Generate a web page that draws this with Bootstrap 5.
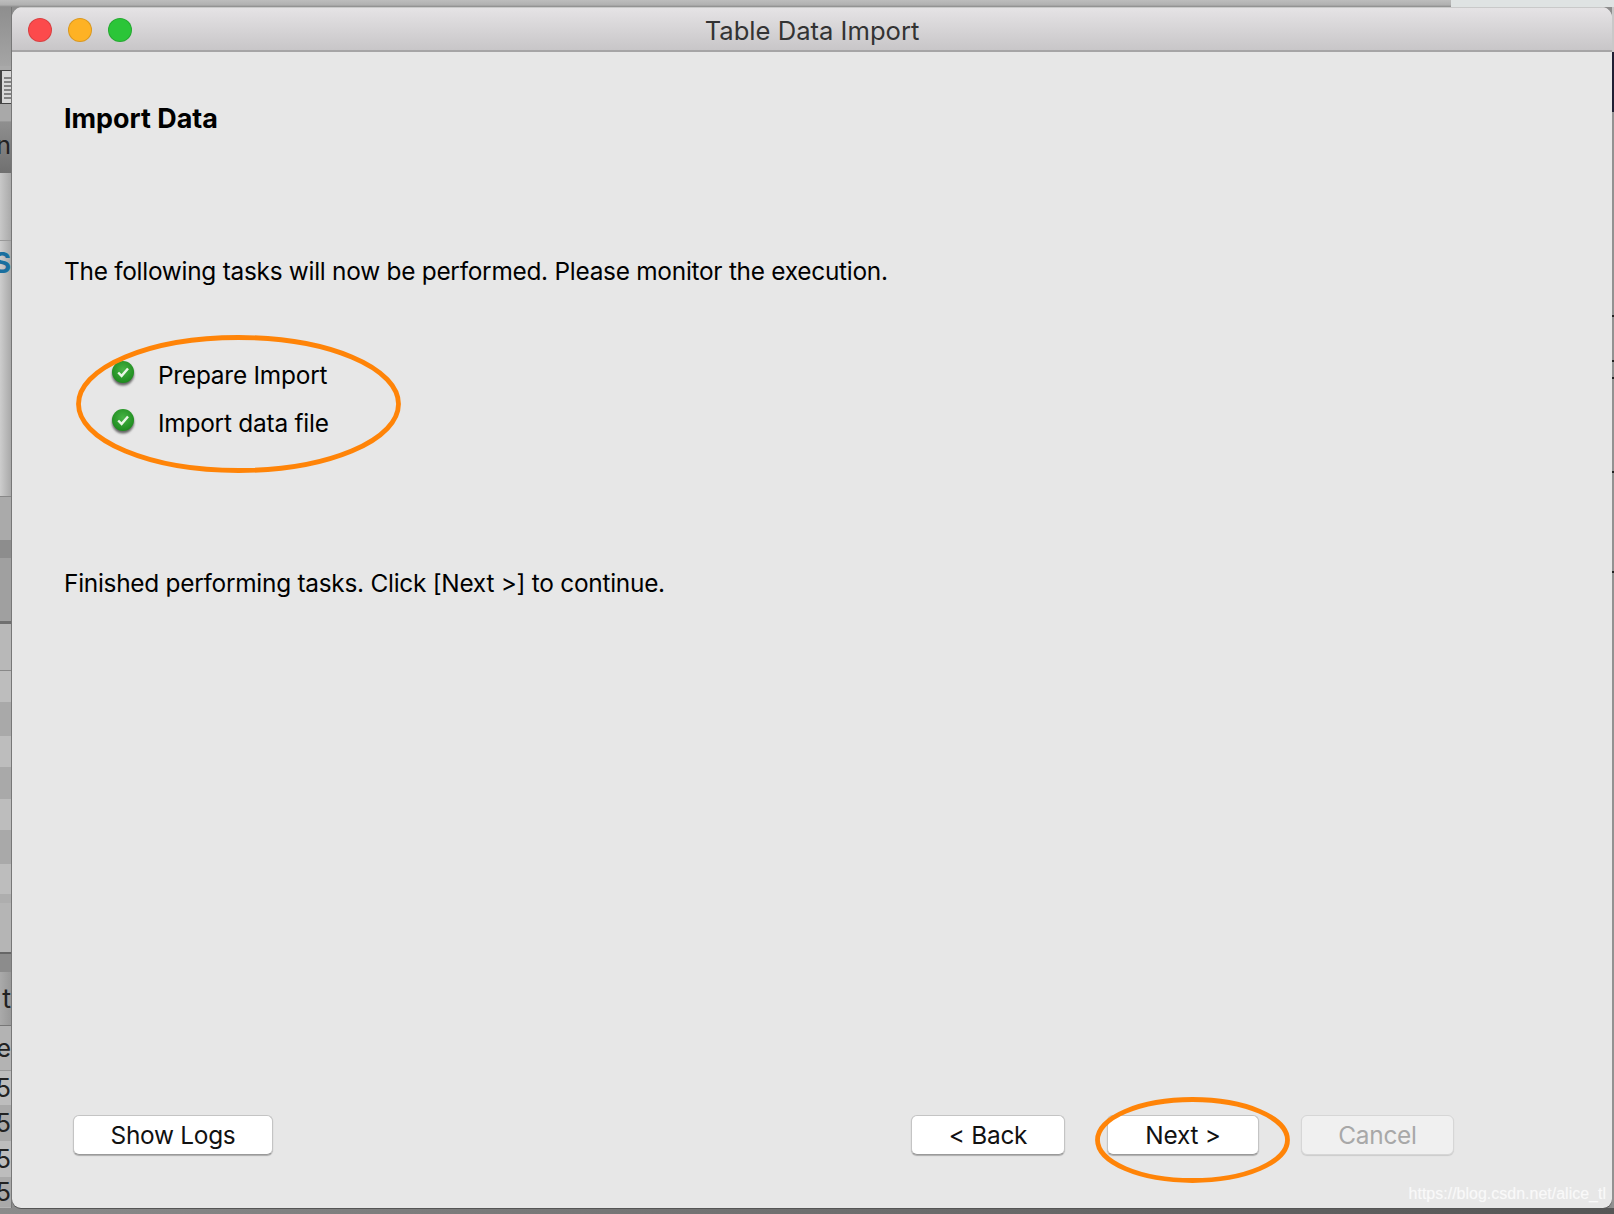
<!DOCTYPE html>
<html lang="en">
<head>
<meta charset="utf-8">
<title>Table Data Import</title>
<link href="https://cdn.jsdelivr.net/npm/bootstrap@5.3.0/dist/css/bootstrap.min.css" rel="stylesheet">
<style>
html,body{margin:0;height:1214px;width:1614px;overflow:hidden;background:#8d8d8d}
body{font-family:Inter,"Liberation Sans",sans-serif;color:#000}
.scene{width:1614px;height:1214px}
.top-strip{height:7px;background:#b4b4b4}
.top-left{width:1451px;background:linear-gradient(#bdbdbd,#b0b0b0 70%,#8a8a8a)}
.top-right{background:#dfe3e3}
.mid{height:1201px}
.left-strip{width:12px;font-size:25px;line-height:1;overflow:hidden;border-right:1px solid #777;background:#b3b3b3}
.lrow{display:flex;align-items:center;justify-content:flex-end;overflow:hidden;white-space:nowrap;color:#222}
.lrow span{flex:none}
.right-strip{width:2px;background:#929292}
.rtick{height:2px;background:#222}
.window{width:1600px;background:#e7e7e7;border-radius:11px 11px 9px 9px;overflow:hidden;position:relative;box-shadow:0 1px 0 #555}
.titlebar{height:45px;background:linear-gradient(#e5e3e5,#c8c6c8);border-bottom:2px solid #a6a5a6;border-top:1px solid #c9c9c9;position:relative}
.dot{width:24px;height:24px;border-radius:50%;border:1px solid rgba(0,0,0,.14)}
.lights{padding:10px 0 0 16px;gap:16px}
.title-text{position:absolute;inset:0;text-align:center;font-size:25.6px;line-height:45px;color:#333}
.pane{height:1156px;padding:0 158px 0 52px}
.heading{font-weight:700;font-size:26.9px;line-height:32px;margin:50px 0 0}
.para{font-size:24.4px;letter-spacing:-.26px;line-height:32px;margin:0}
.intro{margin-top:121px}
.tasks{margin:72px 0 0 46px;gap:16px}
.task{font-size:24.4px;letter-spacing:-.22px;line-height:32px;gap:22px}
.ok{width:26px;height:32px;flex:none;margin-top:-2px}
.finish{margin-top:128px}
.actions{margin-top:auto;padding:0 0 53px 9px;gap:42px}
.wbtn{height:40px;padding:0;font-size:24.4px;letter-spacing:-.26px;line-height:38px;background:#fff;color:#111;border:1px solid #c4c4c4;border-bottom-color:#9a9a9a;border-radius:6px;box-shadow:0 1px 1px rgba(0,0,0,.25);text-align:center}
.wbtn:disabled{background:#f0f0f0;color:#a8a8a8;opacity:1;border-color:#d6d6d6;box-shadow:0 1px 1px rgba(0,0,0,.12)}
.w-logs{width:200px;margin-right:auto}
.w-back{width:154px}
.w-next{width:152px}
.w-cancel{width:153px}
.oval{position:absolute;overflow:visible}
.oval-tasks{left:64px;top:328px;width:325px;height:138px}
.oval-next{left:1083px;top:1090px;width:195px;height:86px}
.mark-text{position:absolute;right:6px;bottom:3px;font-family:"Liberation Sans",sans-serif;font-size:16px;line-height:22px;color:rgba(255,255,255,.6);text-shadow:0 0 1px rgba(255,255,255,.5)}
.bottom-strip{height:6px;background:linear-gradient(90deg,#8b8b8b,#6f6f6f 50%,#565656)}
</style>
</head>
<body>
<div class="scene d-flex flex-column">
  <div class="top-strip d-flex"><div class="top-left"></div><div class="top-right flex-grow-1"></div></div>
  <div class="mid d-flex">
    <div class="left-strip d-flex flex-column" aria-hidden="true">
      <div class="lrow" style="height:59px;background:linear-gradient(#8e8e8e,#a5a5a5)"></div>
      <div class="lrow" style="height:56px;background:#a9a9a9;border-bottom:1px solid #999;align-items:flex-start;padding-top:4px"><svg width="11" height="34" viewBox="0 0 11 34"><rect x="1" y="0" width="12" height="34" fill="#d8d8d8" stroke="#444" stroke-width="2"/><path d="M4 8h8M4 12h8M4 16h8M4 20h8M4 24h8M4 28h8" stroke="#666" stroke-width="1.6"/></svg></div>
      <div class="lrow" style="height:51px;background:linear-gradient(#8f8f8f,#707070);padding-bottom:4px"><span style="color:#222">n</span></div>
      <div class="lrow" style="height:68px;background:linear-gradient(90deg,#c8c8c8,#aaa);border-bottom:1px solid #999"></div>
      <div class="lrow" style="height:256px;background:linear-gradient(90deg,#cdcdcd,#a9a9a9);border-bottom:1px solid #888;align-items:flex-start;padding-top:8px"><span style="color:#1a6f9f;font-weight:700;font-size:28px">S</span></div>
      <div class="lrow" style="height:43px;background:#aaa"></div>
      <div class="lrow" style="height:18px;background:#8d8d8d"></div>
      <div class="lrow" style="height:66px;background:#a0a0a0;border-bottom:3px solid #6f6f6f"></div>
      <div class="lrow" style="height:47px;background:#b8b8b8;border-bottom:1px solid #888"></div>
      <div class="lrow" style="height:31px;background:#bdbdbd"></div>
      <div class="lrow" style="height:34px;background:#a9a9a9"></div>
      <div class="lrow" style="height:31px;background:#bdbdbd"></div>
      <div class="lrow" style="height:32px;background:#a9a9a9"></div>
      <div class="lrow" style="height:31px;background:#bdbdbd"></div>
      <div class="lrow" style="height:34px;background:#a9a9a9"></div>
      <div class="lrow" style="height:30px;background:#bdbdbd"></div>
      <div class="lrow" style="height:9px;background:#aeaeae"></div>
      <div class="lrow" style="height:51px;background:#b5b5b5;border-bottom:2px solid #666"></div>
      <div class="lrow" style="height:18px;background:#8c8c8c"></div>
      <div class="lrow" style="height:54px;background:linear-gradient(90deg,#aaa,#999);border-bottom:1px solid #777;font-size:27px"><span>t</span></div>
      <div class="lrow" style="height:45px;background:#b3b3b3;border-bottom:1px solid #999;font-size:25px"><span>e</span></div>
      <div class="lrow" style="height:34px;background:#bdbdbd;font-size:25px"><span>5</span></div>
      <div class="lrow" style="height:36px;background:#a9a9a9;font-size:25px"><span>5</span></div>
      <div class="lrow" style="height:36px;background:#bdbdbd;font-size:25px"><span>5</span></div>
      <div class="lrow" style="height:30px;background:#a9a9a9;font-size:25px"><span>5</span></div>
    </div>

    <div class="window d-flex flex-column">
      <div class="titlebar">
        <div class="lights d-flex">
          <div class="dot" style="background:#fc4a4c"></div>
          <div class="dot" style="background:#feb224"></div>
          <div class="dot" style="background:#2bc538"></div>
        </div>
        <div class="title-text">Table Data Import</div>
      </div>
      <div class="pane d-flex flex-column">
        <h1 class="heading">Import Data</h1>
        <p class="para intro">The following tasks will now be performed. Please monitor the execution.</p>
        <div class="tasks d-flex flex-column">
          <div class="task d-flex">
            <svg class="ok" viewBox="0 0 26 32"><defs><radialGradient id="g" cx=".5" cy=".4" r=".6"><stop offset="0" stop-color="#47b445"/><stop offset="1" stop-color="#1c8a1d"/></radialGradient><filter id="b" x="-30%" y="-30%" width="160%" height="160%"><feGaussianBlur stdDeviation="1.3"/></filter></defs><circle cx="13" cy="17.5" r="11" fill="#666" filter="url(#b)"/><circle cx="13" cy="15" r="11" fill="url(#g)"/><path d="M8.2 15.5l3.4 3.4 6.4-7.4" fill="none" stroke="#eaf6e6" stroke-width="2.4"/></svg>
            <span>Prepare Import</span>
          </div>
          <div class="task d-flex">
            <svg class="ok" viewBox="0 0 26 32"><circle cx="13" cy="17.5" r="11" fill="#666" filter="url(#b)"/><circle cx="13" cy="15" r="11" fill="url(#g)"/><path d="M8.2 15.5l3.4 3.4 6.4-7.4" fill="none" stroke="#eaf6e6" stroke-width="2.4"/></svg>
            <span>Import data file</span>
          </div>
        </div>
        <p class="para finish">Finished performing tasks. Click [Next &gt;] to continue.</p>
        <div class="actions d-flex">
          <button type="button" class="btn wbtn w-logs">Show Logs</button>
          <button type="button" class="btn wbtn w-back">&lt; Back</button>
          <button type="button" class="btn wbtn w-next">Next &gt;</button>
          <button type="button" class="btn wbtn w-cancel" disabled>Cancel</button>
        </div>
      </div>
      <svg class="oval oval-tasks" viewBox="0 0 325 138"><ellipse cx="162.5" cy="69" rx="160" ry="66.5" fill="none" stroke="#ff8408" stroke-width="4.8"/></svg>
      <svg class="oval oval-next" viewBox="0 0 195 86"><ellipse cx="97.5" cy="43" rx="95" ry="40.5" fill="none" stroke="#ff8408" stroke-width="4.8"/></svg>
      <div class="mark-text">https://blog.csdn.net/alice_tl</div>
    </div>

    <div class="right-strip d-flex flex-column">
      <div style="height:45px;background:#c8c8c8"></div>
      <div style="height:60px;background:#1f1f33"></div>
      <div style="height:203px"></div><div class="rtick"></div>
      <div style="height:43px"></div><div class="rtick"></div>
      <div style="height:15px"></div><div class="rtick"></div>
      <div style="height:92px"></div><div class="rtick"></div>
      <div style="height:98px"></div><div class="rtick"></div>
    </div>
  </div>
  <div class="bottom-strip"></div>
</div>
</body>
</html>
